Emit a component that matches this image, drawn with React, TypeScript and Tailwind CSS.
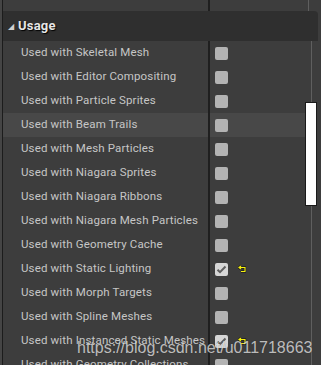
import React from "react";

type Row = { label: string; checked?: boolean };

const rows: Row[] = [
  { label: "Used with Skeletal Mesh" },
  { label: "Used with Editor Compositing" },
  { label: "Used with Particle Sprites" },
  { label: "Used with Beam Trails" },
  { label: "Used with Mesh Particles" },
  { label: "Used with Niagara Sprites" },
  { label: "Used with Niagara Ribbons" },
  { label: "Used with Niagara Mesh Particles" },
  { label: "Used with Geometry Cache" },
  { label: "Used with Static Lighting", checked: true },
  { label: "Used with Morph Targets" },
  { label: "Used with Spline Meshes" },
  { label: "Used with Instanced Static Meshes", checked: true },
  { label: "Used with Geometry Collections" },
];

const ResetArrow = () => (
  <svg width="9" height="8" viewBox="0 0 9 8" className="ml-[10px]">
    <path d="M3 1 L1 2.5 L3 4 M1 2.5 H7 V6.5 H3" fill="none" stroke="#101010" strokeWidth="2.2" />
    <path d="M3 1 L1 2.5 L3 4 M1 2.5 H7 V6.5 H3" fill="none" stroke="#f5f010" strokeWidth="1.2" />
  </svg>
);

const CheckBox = ({ checked }: { checked?: boolean }) =>
  checked ? (
    <div className="w-[13px] h-[13px] rounded-[2px] bg-[#d6d6d6] flex items-center justify-center">
      <svg width="11" height="9" viewBox="0 0 11 9">
        <path d="M1.5 4.8 L4 7.2 L9.5 1.5" fill="none" stroke="#5e5e5e" strokeWidth="2" />
      </svg>
    </div>
  ) : (
    <div className="w-[13px] h-[13px] rounded-[2px] bg-[#b3b3b3]" />
  );

export default function App() {
  return (
    <div
      className="relative w-[321px] h-[365px] overflow-hidden bg-[#3d3d3d] flex"
      style={{ fontFamily: "Roboto, 'Liberation Sans', sans-serif" }}
    >
      {/* left edge */}
      <div className="w-[3px] shrink-0 bg-[#454545] border-r border-[#1c1c1c]" />

      <div className="flex-1 flex flex-col">
        {/* top strip */}
        <div className="h-[11px] flex shrink-0">
          <div className="w-[207px] border-r-2 border-[#1f1f1f]" />
          <div className="w-[99px] border-r border-[#5f5f5f]" />
        </div>

        {/* header */}
        <div className="h-[30px] shrink-0 mr-[3px] bg-[#2f2f2f] rounded-tr-[4px] flex items-center pl-[5px]">
          <span className="text-[#cfcfcf] text-[8px] leading-none mt-[2px]">◢</span>
          <span
            className="ml-[4px] text-[13px] font-bold text-[#e6e6e6] tracking-[0.2px]"
            style={{ textShadow: "1px 1px 1px #000" }}
          >
            Usage
          </span>
        </div>

        {/* rows */}
        <div className="flex flex-1 min-h-0">
          <div className="w-[302px] flex flex-col">
            {rows.map((r, i) => (
              <div
                key={r.label}
                className={`h-[24px] shrink-0 flex ${i === 3 ? "bg-[#484848]" : ""}`}
              >
                <div className="w-[207px] flex items-center pl-[18px] text-[11.5px] tracking-[0.15px] text-[#c6c6c6] border-r-2 border-[#1f1f1f] whitespace-nowrap">
                  {r.label}
                </div>
                <div className="flex items-center pl-[5px]">
                  <CheckBox checked={r.checked} />
                  {r.checked && <ResetArrow />}
                </div>
              </div>
            ))}
          </div>
          <div className="relative flex-1">
            <div className="ml-[6px] h-full w-[1px] bg-[#5f5f5f]" />
            <div className="absolute left-0 top-[61px] w-[12px] h-[104px] bg-white border border-[#1a1a1a]" />
          </div>
        </div>
      </div>

      {/* watermark */}
      <div
        className="absolute left-[77px] top-[338px] text-[16px] leading-[20px] text-white/70"
        style={{ fontFamily: "'Liberation Sans', Arial, sans-serif", textShadow: "0 0 1px rgba(0,0,0,0.4)" }}
      >
        https://blog.csdn.net/u011718663
      </div>
    </div>
  );
}
